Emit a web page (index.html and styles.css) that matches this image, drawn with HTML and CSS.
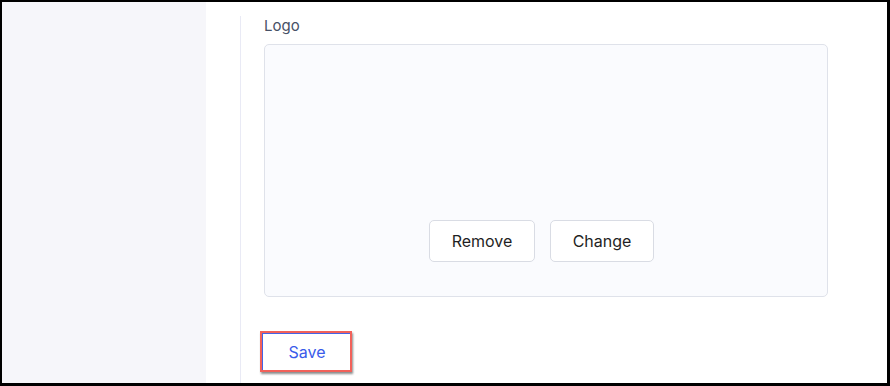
FILE: index.html
```html
<!DOCTYPE html>
<html lang="en">
<head>
    <meta charset="UTF-8">
    <meta name="viewport" content="width=device-width, initial-scale=1.0">
    <title>Logo settings</title>
    <link rel="stylesheet" href="styles.css">
</head>
<body>
    <div class="frame">
        <aside class="sidebar"></aside>
        <main class="main">
            <div class="panel">
                <label class="field-label">Logo</label>
                <div class="logo-box">
                    <button class="btn btn-remove">Remove</button>
                    <button class="btn btn-change">Change</button>
                </div>
                <div class="actions">
                    <button class="save">Save</button>
                </div>
            </div>
        </main>
    </div>
</body>
</html>
```

FILE: styles.css
```css
body {
    margin: 0;
    padding: 0;
    background: #000;
    font-family: Inter, 'Noto Sans', sans-serif;
}
.frame {
    display: flex;
    height: 381px;
    border-style: solid;
    border-color: #000;
    border-width: 2px 3px 3px 2px;
    background: #fff;
    overflow: hidden;
}
.sidebar {
    width: 204px;
    background: #f6f6fa;
}
.main {
    flex: 1;
    padding-left: 34px;
}
.panel {
    height: 100%;
    border-left: 1px solid #e9eaf5;
    padding-left: 23px;
    box-sizing: border-box;
}
.field-label {
    display: block;
    margin-top: 14px;
    font-size: 15px;
    line-height: 20px;
    color: #475166;
}
.logo-box {
    box-sizing: border-box;
    width: 564px;
    height: 253px;
    margin-top: 8px;
    border: 1px solid #dfe2ea;
    border-radius: 5px;
    background: #fafbfe;
    display: flex;
    justify-content: center;
    align-items: flex-end;
    gap: 15px;
    padding: 0 9px 34px 0;
}
.btn {
    height: 42px;
    padding: 0;
    background: #fff;
    border: 1px solid #d9dce4;
    border-radius: 5px;
    font-family: inherit;
    font-size: 16px;
    color: #1f1f24;
}
.btn-remove {
    width: 106px;
}
.btn-change {
    width: 104px;
}
.actions {
    margin-top: 34px;
}
.save {
    margin-left: -4px;
    width: 92px;
    height: 41px;
    padding: 0 0 0 2px;
    background: #fff;
    border: 2px solid #f2615a;
    font-family: inherit;
    font-size: 16px;
    color: #3a5bea;
    box-shadow: inset 1px 1px 0 #4464e6, 1px 2px 2px rgba(0, 0, 0, 0.45);
}
```
